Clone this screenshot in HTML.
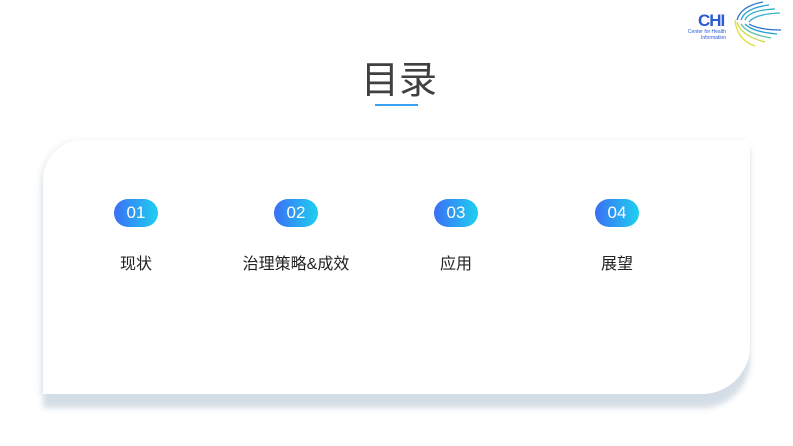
<!DOCTYPE html>
<html><head><meta charset="utf-8"><style>
body{margin:0;width:793px;height:446px;background:#fff;position:relative;overflow:hidden;font-family:"Liberation Sans","Noto Sans CJK SC",sans-serif}
.title{position:absolute;left:0;width:798px;top:56px;text-align:center;font-size:38px;color:#404040;line-height:50px}
.ul{position:absolute;left:375px;top:104px;width:43px;height:2px;background:#3aa0f0}
.shadow{position:absolute;left:43px;top:150px;width:707px;height:258px;background:#d5dde6;border-radius:40px 0 48px 0;filter:blur(3px)}
.card{position:absolute;left:43px;top:140px;width:707px;height:254px;background:#fff;border-radius:40px 0 48px 0;box-shadow:-3px 0 6px rgba(210,220,230,.4)}
.pill{position:absolute;width:44px;height:28px;border-radius:14px;background:linear-gradient(90deg,#3a6ff5,#1fd0f0);color:#fff;font-size:17px;line-height:28px;text-align:center}
.lab{position:absolute;width:160px;text-align:center;font-size:16px;color:#222;top:250px}
</style></head><body>
<div class="title">目录</div><div class="ul"></div>
<div class="shadow"></div><div class="card"></div>
<div class="pill" style="left:114px;top:199px">01</div>
<div class="pill" style="left:274px;top:199px">02</div>
<div class="pill" style="left:434px;top:199px">03</div>
<div class="pill" style="left:595px;top:199px">04</div>
<div class="lab" style="left:56px">现状</div>
<div class="lab" style="left:216px">治理策略&amp;成效</div>
<div class="lab" style="left:376px">应用</div>
<div class="lab" style="left:537px">展望</div>
<div style="position:absolute;left:698px;top:11px;color:#2a5bd0;font-size:17px;font-weight:bold;letter-spacing:-1px">CHI</div>
<div style="position:absolute;left:684px;top:29px;color:#2a5bd0;font-size:5px;line-height:6px;text-align:right;width:42px">Center for Health<br>Information</div>
<svg style="position:absolute;left:725px;top:0" width="68" height="48" viewBox="0 0 68 48" fill="none" stroke-width="1.3">
<path d="M38 2 Q16 6 12 20" stroke="#2a6fd0"/><path d="M44 5 Q20 8 16 20" stroke="#2a9fd0"/><path d="M50 9 Q24 10 20 20" stroke="#2ab0c0"/>
<path d="M55 13 Q30 14 24 22" stroke="#3ab0d0"/><path d="M12 22 Q16 36 40 42" stroke="#c8d840"/><path d="M16 24 Q22 34 46 38" stroke="#60c0a0"/>
<path d="M20 24 Q28 32 52 34" stroke="#2a9fd0"/><path d="M24 24 Q34 30 56 30" stroke="#2a6fd0"/><path d="M10 20 Q12 40 30 46" stroke="#e0e040"/>
</svg>
</body></html>
